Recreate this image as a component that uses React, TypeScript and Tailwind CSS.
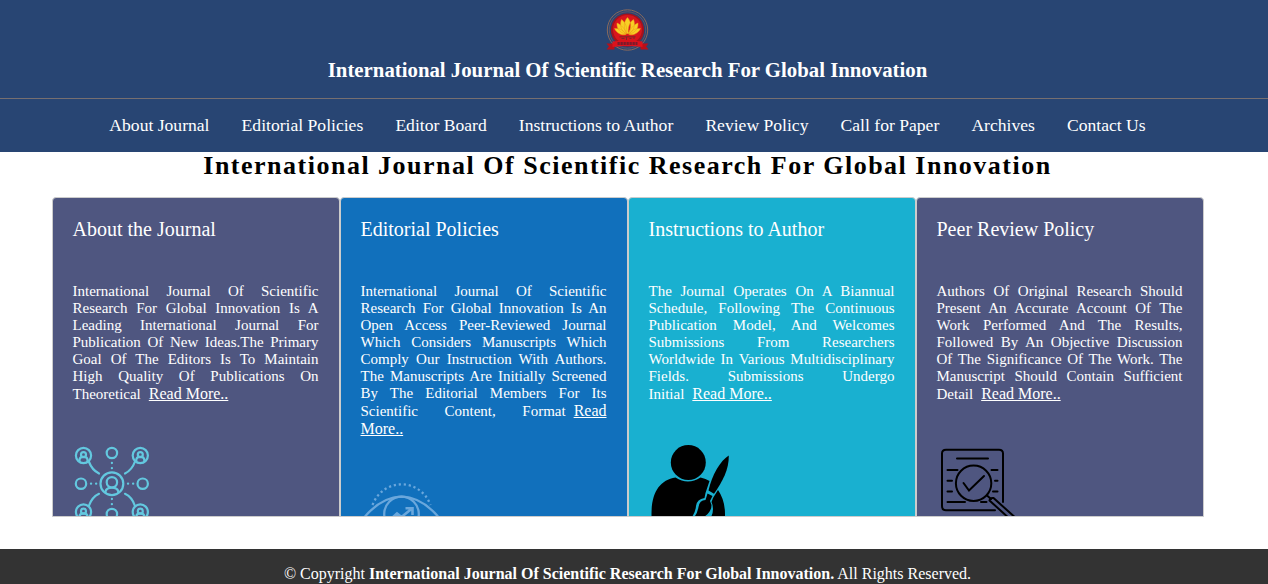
import React from "react";

const navItems = [
  "About Journal",
  "Editorial Policies",
  "Editor Board",
  "Instructions to Author",
  "Review Policy",
  "Call for Paper",
  "Archives",
  "Contact Us",
];

function Logo() {
  return (
    <svg width="44" height="44" viewBox="0.5 0 44 44" className="block">
      <circle cx="22" cy="22" r="20.2" fill="none" stroke="#8a6a5c" strokeWidth="1" />
      <circle cx="22" cy="22" r="18.2" fill="none" stroke="#6d5b62" strokeWidth="0.8" />
      <circle cx="22" cy="22" r="16.600" fill="#a5131d" />
      <circle cx="22" cy="21.500" r="14.500" fill="#d9151c" />
      <path d="M1 35.500H9V41.500H1L3.500 38.500ZM43 35.500H35V41.500H43L40.500 38.500Z" fill="#b80f19" />
      <path d="M7 33.500Q22 31.500 37 33.500V39Q22 36.800 7 39Z" fill="#dc121c" />
      <path
        d="M22 26C17 20 18.500 13 22 9.500C25.500 13 27 20 22 26ZM21 26C15 23 14 16 16 11.500C20 14 22 20 21 26ZM23 26C29 23 30 16 28 11.500C24 14 22 20 23 26ZM20.500 26C14 25 11 20 11.500 15C16 17 20 21 20.500 26ZM23.500 26C30 25 33 20 32.500 15C28 17 24 21 23.500 26ZM20.500 26.500C15 28 10.500 24 9 20.500C14 20 18 22 20.500 26.500ZM23.500 26.500C29 28 33.500 24 35 20.500C30 20 26 22 23.500 26.500Z"
        fill="#f8cf25"
        stroke="#eb9c18"
        strokeWidth="0.5"
      />
      <path d="M14 28.800H30M16 30.500H19M21 29V32M24 30.500H26M28.500 29V31" stroke="#7c2927" strokeWidth="1" />
      <path d="M12 35.500H32" fill="none" stroke="#7b1b2b" strokeWidth="3" strokeDasharray="2.300 0.700" />
    </svg>
  );
}

function Person({ x, y }: { x: number; y: number }) {
  return (
    <g>
      <circle cx={x} cy={y} r="7.600" />
      <circle cx={x} cy={y - 0.8} r="2.500" />
      <path d={`M${x - 4} ${y + 6}v-1.500q0-3.200 4-3.200t4 3.200v1.500`} />
    </g>
  );
}

function NetworkIcon() {
  return (
    <svg width="80" height="80" viewBox="73 443 80 80" className="block shrink-0" fill="none" stroke="#63c8df" strokeWidth="2.200" strokeLinecap="round">
      <Person x={83.500} y={455.500} />
      <Person x={140.300} y={455.500} />
      <Person x={83.500} y={512} />
      <Person x={140.300} y={512} />
      <circle cx="111.900" cy="453" r="5.200" />
      <circle cx="81" cy="483.700" r="5.200" />
      <circle cx="142.700" cy="483.700" r="5.200" />
      <circle cx="111.900" cy="514" r="5.200" />
      <circle cx="111.900" cy="483.700" r="11.400" />
      <circle cx="111.900" cy="482.300" r="5.200" />
      <path d="M105.500 492.500v-1q1-3.800 6.400-3.800t6.400 3.800v1" />
      <path d="M88.800 461.500Q92 470 99 473.500M135 461.500Q132 470 125 473.500M88.800 506Q92 497 99 493.800M135 506Q132 497 125 493.800" />
      <path d="M111.900 463V469M111.900 499V506M91 483.700H97M128 483.700H134" strokeDasharray="0.1 5" strokeWidth="2.300" />
    </svg>
  );
}

function VisionIcon() {
  return (
    <svg width="80" height="80" viewBox="361 478 80 80" className="block shrink-0" fill="none" stroke="#6aa7dc" strokeWidth="2.300">
      <path d="M365 516.500Q382 497 401.500 496.700Q421 497 438 516.500" />
      <circle cx="401.500" cy="514" r="17.300" />
      <path d="M372.500 505C383 477.500 420 477.500 430.500 505" strokeDasharray="2.200 2.800" strokeWidth="2.300" />
      <path d="M392.500 517.500L397 513.500L401.500 517L412 508.500M405.500 508.300H412.500V515" strokeWidth="2.600" />
    </svg>
  );
}

function AuthorIcon() {
  return (
    <svg width="80" height="80" viewBox="649 443 80 80" className="block shrink-0 overflow-visible" fill="#000">
      <circle cx="688.300" cy="462.500" r="17.500" />
      <path d="M651.500 523V514C651.500 492 660 480 675.500 477.500Q688 485.500 700.500 477.500Q706 478.500 709.500 481L705.500 493L704.500 498Q697 499 696 506Q695.500 512 692 517V523Z" />
      <path d="M718 490Q725 500 725 514V523H707Q713 516 713 509Q713 505 711.500 502L713 498Z" />
      <path d="M728.800 455.500C720 461 712 475 708.500 490.500L714 493.800C723 481 729 469 728.800 455.500Z" />
      <path d="M707.500 493.500L712.500 496L710 501L711.500 505Q711.500 513 702 518L693 518Q697 515 698.500 507Q699.500 500 705.500 500Z" />
    </svg>
  );
}

function ReviewIcon() {
  return (
    <svg width="80" height="80" viewBox="937 443 80 80" className="block shrink-0" fill="none" stroke="#000" strokeWidth="2" strokeLinecap="round">
      <path d="M1003 502V453.500Q1003 449.700 999 449.700H946Q942 449.700 942 453.500V506Q942 510.300 946 510.300H995" />
      <path d="M957 458.500H988M947.500 470H957.500M991.500 470H997.500M947.500 480.700H952M995 480.700H997.500M947.500 491.500H952M993 491.500H997.500M947.500 502H965M981 502H986.500" />
      <circle cx="973.600" cy="483.300" r="17.700" />
      <path d="M963.500 483L969 490.500L984 476M987 495.500L991 499" />
      <path d="M989.500 500.500Q990 497.500 993.500 498L1018 520M989.500 500.500L1011 520" />
    </svg>
  );
}

interface CardData {
  title: string;
  text: string;
  bg: string;
  icon: React.ReactNode;
}

const cards: CardData[] = [
  {
    title: "About the Journal",
    text: "International Journal Of Scientific Research For Global Innovation Is A Leading International Journal For Publication Of New Ideas.The Primary Goal Of The Editors Is To Maintain High Quality Of Publications On Theoretical",
    bg: "bg-[#4f5680]",
    icon: <NetworkIcon />,
  },
  {
    title: "Editorial Policies",
    text: "International Journal Of Scientific Research For Global Innovation Is An Open Access Peer-Reviewed Journal Which Considers Manuscripts Which Comply Our Instruction With Authors. The Manuscripts Are Initially Screened By The Editorial Members For Its Scientific Content, Format",
    bg: "bg-[#1170bc]",
    icon: <VisionIcon />,
  },
  {
    title: "Instructions to Author",
    text: "The Journal Operates On A Biannual Schedule, Following The Continuous Publication Model, And Welcomes Submissions From Researchers Worldwide In Various Multidisciplinary Fields. Submissions Undergo Initial",
    bg: "bg-[#19b0d0]",
    icon: <AuthorIcon />,
  },
  {
    title: "Peer Review Policy",
    text: "Authors Of Original Research Should Present An Accurate Account Of The Work Performed And The Results, Followed By An Objective Discussion Of The Significance Of The Work. The Manuscript Should Contain Sufficient Detail",
    bg: "bg-[#4f5680]",
    icon: <ReviewIcon />,
  },
];

function Card({ title, text, bg, icon }: CardData) {
  return (
    <article className={`flex h-80 w-72 flex-col overflow-hidden rounded-t border border-[#ccc] px-5 pt-5 text-white ${bg}`}>
      <h2 className="mb-[42px] h-[23px] text-xl leading-[23px]">{title}</h2>
      <p className="mb-10 text-justify text-[15px] leading-[17px]">
        {text}
        <a className="ml-2 text-[16px] leading-[18px] underline" href="#">Read More..</a>
      </p>
      {icon}
    </article>
  );
}

export default function App() {
  return (
    <div className="flex h-[584px] flex-col overflow-hidden bg-white font-['Liberation_Serif',serif]">
      <header className="bg-[#284573] text-white">
        <div className="flex h-[99px] flex-col items-center border-b border-[#776f70] pr-[13px] pt-2">
          <Logo />
          <h1 className="mt-1.5 text-[20.8px] font-bold leading-[23px]">International Journal Of Scientific Research For Global Innovation</h1>
        </div>
        <nav className="flex h-[53px] items-center justify-center gap-[32.1px] pb-px pr-[13px] text-[17.6px]">
          {navItems.map((item) => (
            <a key={item} href="#">{item}</a>
          ))}
        </nav>
      </header>
      <main className="h-[397px] pr-[13px]">
        <h2 className="h-[45px] text-center text-[26px] font-bold leading-[28px] tracking-[1.5px]">International Journal Of Scientific Research For Global Innovation</h2>
        <div className="flex justify-center">
          {cards.map((card) => (
            <Card key={card.title} {...card} />
          ))}
        </div>
      </main>
      <footer className="h-[35px] bg-[#333] pr-[13px] pt-4 text-center text-base leading-[18px] text-white">
        © Copyright <strong>International Journal Of Scientific Research For Global Innovation.</strong> All Rights Reserved.
      </footer>
    </div>
  );
}
